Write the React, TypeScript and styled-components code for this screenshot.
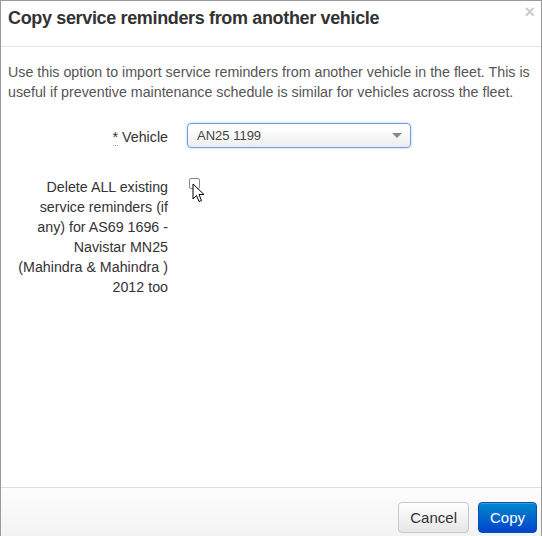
import React from "react";
import styled, { createGlobalStyle } from "styled-components";

const GlobalStyle = createGlobalStyle`
  html, body {
    margin: 0;
    padding: 0;
    background: #ffffff;
  }
  body {
    font-family: "Liberation Sans", Arial, sans-serif;
    color: #333333;
  }
`;

function CursorIcon() {
    return (
        <Cursor width="13" height="21" viewBox="0 0 13 21">
            <path d="M1 1 L1 16 L4.5 12.5 L7 18.5 L9.5 17.5 L7 11.5 L12 11.5 Z"
                  fill="#ffffff" stroke="#000000" strokeWidth="1" strokeLinejoin="round"/>
        </Cursor>
    );
}

export default function App() {
    return (
        <>
            <GlobalStyle/>
            <Modal>
                <Header>
                    <Title>Copy service reminders from another vehicle</Title>
                    <Close>×</Close>
                </Header>
                <Body>
                    <Intro>
                        Use this option to import service reminders from another vehicle in the fleet. This is
                        useful if preventive maintenance schedule is similar for vehicles across the fleet.
                    </Intro>
                    <FormRow>
                        <Label><Required>*</Required> Vehicle</Label>
                        <Controls>
                            <Select>
                                <span>AN25 1199</span>
                                <Caret/>
                            </Select>
                        </Controls>
                    </FormRow>
                    <FormRow>
                        <Label>
                            Delete ALL existing service reminders (if any) for AS69 1696 - Navistar MN25
                            (Mahindra &amp; Mahindra ) 2012 too
                        </Label>
                        <Controls>
                            <CheckWrap>
                                <Checkbox/>
                                <CursorIcon/>
                            </CheckWrap>
                        </Controls>
                    </FormRow>
                </Body>
                <Footer>
                    <Button>Cancel</Button>
                    <Button primary>Copy</Button>
                </Footer>
            </Modal>
        </>
    );
}

const Modal = styled.div`
  box-sizing: border-box;
  width: 542px;
  height: 536px;
  border: 1px solid #9a9a9a;
  border-bottom: none;
  display: flex;
  flex-direction: column;
  background: #ffffff;
`

const Header = styled.div`
  position: relative;
  height: 46px;
  padding: 7px 7px 0;
  box-sizing: border-box;
  border-bottom: 1px solid #e5e5e5;
`

const Title = styled.h3`
  margin: 0;
  font-size: 18px;
  letter-spacing: -0.35px;
  font-weight: bold;
  line-height: 20px;
  color: #333333;
`

const Close = styled.span`
  position: absolute;
  top: 1px;
  right: 6px;
  font-size: 18px;
  font-weight: bold;
  line-height: 20px;
  color: #000000;
  opacity: 0.2;
`

const Body = styled.div`
  flex: 1;
  padding: 15px 7px 0;
`

const Intro = styled.p`
  margin: 0 0 20px;
  font-size: 14.25px;
  line-height: 20px;
  color: #555555;
`

const FormRow = styled.div`
  display: flex;
  align-items: flex-start;
  margin-bottom: 24px;
  font-size: 14.25px;
  line-height: 20px;
`

const Label = styled.label`
  width: 152px;
  margin-left: 8px;
  text-align: right;
  padding-top: 5px;
  color: #333333;
  flex-shrink: 0;
`

const Required = styled.span`
  border-bottom: 1px dotted #999999;
`

const Controls = styled.div`
  margin-left: 19px;
`

const Select = styled.div`
  box-sizing: border-box;
  width: 224px;
  height: 25px;
  margin-top: 1px;
  padding: 0 9px;
  display: flex;
  align-items: center;
  justify-content: space-between;
  font-size: 13px;
  color: #444444;
  border: 1px solid #6f9fe0;
  border-radius: 4px;
  background: linear-gradient(#ffffff 20%, #ececec);
  box-shadow: 0 0 3px rgba(82, 128, 230, 0.45);
`

const Caret = styled.span`
  width: 0;
  height: 0;
  border-left: 5px solid transparent;
  border-right: 5px solid transparent;
  border-top: 5px solid #888888;
  margin-right: -1px;
`

const CheckWrap = styled.div`
  position: relative;
  padding-top: 6px;
  padding-left: 2px;
`

const Checkbox = styled.span`
  display: block;
  box-sizing: border-box;
  width: 11px;
  height: 11px;
  border: 1px solid #888888;
  border-radius: 2px;
  background: #ffffff;
`

const Cursor = styled.svg`
  position: absolute;
  left: 5px;
  top: 11px;
`

const Footer = styled.div`
  height: 49px;
  box-sizing: border-box;
  border-top: 1px solid #dddddd;
  background: linear-gradient(#fdfdfd, #f3f3f3);
  display: flex;
  justify-content: flex-end;
  align-items: flex-end;
  gap: 9px;
  padding: 0 4px 3px 0;
`

const Button = styled.button<{ primary?: boolean }>`
  height: 31px;
  padding: 0 11px;
  font-family: "Liberation Sans", Arial, sans-serif;
  font-size: 15px;
  border-radius: 4px;
  border: 1px solid ${p => p.primary ? "#0050b8" : "#c8c8c8"};
  color: ${p => p.primary ? "#ffffff" : "#333333"};
  background: ${p => p.primary
    ? "linear-gradient(#0088cc, #0044cc)"
    : "linear-gradient(#ffffff, #e6e6e6)"};
  box-shadow: inset 0 1px 0 rgba(255, 255, 255, 0.2);
`
